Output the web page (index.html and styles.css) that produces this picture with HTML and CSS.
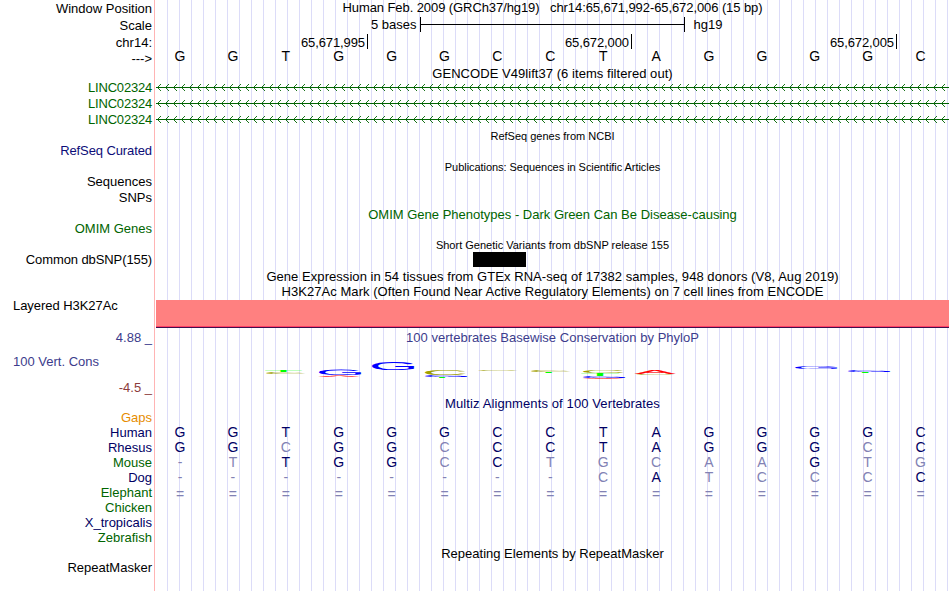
FILE: index.html
```html
<!DOCTYPE html>
<html lang="en">
<head>
<meta charset="utf-8">
<title>Genome Browser</title>
<link rel="stylesheet" href="styles.css">
</head>
<body>
<main class="browser">
  <div class="row h17"><div class="label">Window Position</div><div class="track up"><span class="t-pos">Human Feb. 2009 (GRCh37/hg19) &nbsp; chr14:65,671,992-65,672,006 (15 bp)</span></div></div>
  <div class="row h17"><div class="label">Scale</div><div class="scale up"><span class="bases">5 bases</span><span class="bar"></span><span>hg19</span></div></div>
  <div class="row h16"><div class="label">chr14:</div><div class="ruler"><span>65,671,995</span><span>65,672,000</span><span>65,672,005</span></div></div>
  <div class="row h16"><div class="label">---&gt;</div><div class="seq bases-row" data-seq="GGTGGGCCTAGGGGC"></div></div>
  <div class="row h14"><div class="label"></div><div class="track"><span class="t-gencode">GENCODE V49lift37 (6 items filtered out)</span></div></div>
  <div class="row h16"><div class="label green up linc">LINC02324</div><svg class="gene" viewBox="0 0 793 16"></svg></div>
  <div class="row h16"><div class="label green up linc">LINC02324</div><svg class="gene" viewBox="0 0 793 16"></svg></div>
  <div class="row h16"><div class="label green up linc">LINC02324</div><svg class="gene" viewBox="0 0 793 16"></svg></div>
  <div class="row h15"><div class="label"></div><div class="track small down"><span class="t-refseq">RefSeq genes from NCBI</span></div></div>
  <div class="row h16"><div class="label blue up tight">RefSeq Curated</div></div>
  <div class="row h15"><div class="label"></div><div class="track small down"><span class="t-pub">Publications: Sequences in Scientific Articles</span></div></div>
  <div class="row h16"><div class="label up">Sequences</div></div>
  <div class="row h16"><div class="label up">SNPs</div></div>
  <div class="row h17"><div class="label"></div><div class="track green"><span class="t-omim">OMIM Gene Phenotypes - Dark Green Can Be Disease-causing</span></div></div>
  <div class="row h14"><div class="label green up2">OMIM Genes</div></div>
  <div class="row h15"><div class="label"></div><div class="track small down"><span class="t-dbsnp">Short Genetic Variants from dbSNP release 155</span></div></div>
  <div class="row h15"><div class="label tight">Common dbSNP(155)</div><div class="snp"></div></div>
  <div class="row h18"><div class="label"></div><div class="track"><span class="t-gtex">Gene Expression in 54 tissues from GTEx RNA-seq of 17382 samples, 948 donors (V8, Aug 2019)</span></div></div>
  <div class="row h15"><div class="label"></div><div class="track up"><span class="t-h3k">H3K27Ac Mark (Often Found Near Active Regulatory Elements) on 7 cell lines from ENCODE</span></div></div>
  <div class="row h28"><div class="label left layered">Layered H3K27Ac</div><div class="signal"></div></div>
  <div class="row h18"><div class="label cons">4.88 _</div><div class="track cons"><span class="t-phylo">100 vertebrates Basewise Conservation by PhyloP</span></div></div>
  <div class="row h50"><div class="side"><div class="label left cons">100 Vert. Cons</div><div class="label neg">-4.5 _</div></div><svg class="logo" viewBox="156 346 793 50"></svg></div>
  <div class="row h15"><div class="label"></div><div class="track navy"><span class="t-multiz">Multiz Alignments of 100 Vertebrates</span></div></div>
  <div class="row h14"><div class="label orange up">Gaps</div></div>
  <div class="row h15"><div class="label navy">Human</div><div class="seq" data-seq="GGTGGGCCTAGGGGC"></div></div>
  <div class="row h15"><div class="label navy">Rhesus</div><div class="seq" data-seq="GGcGGcCCTAGGGcC"></div></div>
  <div class="row h15"><div class="label leaf">Mouse</div><div class="seq" data-seq="-tTGGcCtgcaaGtg"></div></div>
  <div class="row h15"><div class="label navy">Dog</div><div class="seq" data-seq="--------cAtcccC"></div></div>
  <div class="row h15"><div class="label leaf">Elephant</div><div class="seq down2" data-seq="==============="></div></div>
  <div class="row h15"><div class="label leaf">Chicken</div></div>
  <div class="row h15"><div class="label navy">X_tropicalis</div></div>
  <div class="row h15"><div class="label leaf">Zebrafish</div></div>
  <div class="row h15"><div class="label"></div><div class="track down"><span class="t-repeat">Repeating Elements by RepeatMasker</span></div></div>
  <div class="row h15"><div class="label">RepeatMasker</div></div>
</main>
<script src="script.js"></script>
</body>
</html>
```
FILE: styles.css
```css
* { box-sizing: border-box; }
body { margin: 0; background: #fff; }
.browser {
  width: 950px; height: 591px; overflow: hidden;
  font: 13px/15px "Liberation Sans", sans-serif; color: #000;
  background:
    linear-gradient(#ffb4b4, #ffb4b4) 154px 0 / 1px 100% no-repeat,
    repeating-linear-gradient(90deg, #dcdcf8 0 1px, transparent 1px 12px) 167px 0 / 783px 100% no-repeat;
}
.row { display: flex; align-items: center; }
.h14 { height: 14px; } .h15 { height: 15px; } .h16 { height: 16px; } .h17 { height: 17px; }
.h18 { height: 18px; } .h28 { height: 28px; } .h50 { height: 50px; }
.label { width: 156px; flex: none; padding-right: 4px; text-align: right; white-space: nowrap; }
.label.left { text-align: left; padding-left: 13px; }
.label.layered { align-self: flex-start; margin-top: -2px; letter-spacing: -0.05px; }
.track { width: 793px; text-align: center; white-space: pre; }
.up { margin-top: -2px; }
.up2 { margin-top: -4px; }
.down { margin-top: 2px; }
.down2 { margin-top: 4px; }
.small { font-size: 11px; }
.linc { letter-spacing: -0.2px; }
.tight { letter-spacing: -0.1px; }
.t-pos { letter-spacing: -0.085px; }
.t-gencode { letter-spacing: 0.05px; }
.t-pub { letter-spacing: -0.05px; }
.t-gtex { letter-spacing: 0.055px; }
.t-h3k { letter-spacing: 0.05px; }
.t-phylo { letter-spacing: 0.02px; }
.t-multiz { letter-spacing: 0.11px; }
.green { color: #006400; } .blue { color: #0c0c78; } .navy { color: #000064; }
.leaf { color: #006400; } .orange { color: #e68c00; } .cons { color: #3c3c8c; } .neg { color: #8c3c3c; }
.scale { display: flex; align-items: center; padding-left: 215px; height: 17px; }
.bases { margin-right: 3px; }
.bar {
  width: 265px; height: 15px; margin-right: 9px;
  border: solid #000; border-width: 0 1px;
  background: linear-gradient(#000, #000) 0 7px / 100% 1px no-repeat;
}
.ruler { display: flex; height: 16px; letter-spacing: -0.1px; }
.ruler span { height: 15px; padding-right: 2px; text-align: right; border-right: 1px solid #000; line-height: 17px; }
.ruler span:nth-child(1) { width: 212px; }
.ruler span:nth-child(2) { width: 264px; }
.ruler span:nth-child(3) { width: 265px; }
.row .seq { display: grid; grid-template-columns: repeat(15, 52.9px); margin-left: -2.4px; text-align: center; font-size: 14px; color: #000; }
.row .bases-row { margin-top: -3px; }
.row .label.navy + .seq, .row .label.leaf + .seq { color: #000064; }
.label + .seq .mismatch { color: #8282b4; }
.gene { width: 793px; height: 16px; display: block; fill: none; stroke: #006400; }
.gene .heads { stroke-width: 0.9; }
.snp { width: 53px; height: 15px; margin-left: 317px; background: #000; }
.signal { width: 793px; height: 28px; background: #ff8080; border-bottom: 1px solid #40104c; box-shadow: inset 0 -1px #ff4066; }
.side { display: flex; flex-direction: column; justify-content: space-between; height: 50px; padding: 8px 0 1px; }
.logo { width: 793px; height: 50px; font: 10px "Liberation Sans", sans-serif; text-rendering: geometricPrecision; }
.base-A { fill: #f00; } .base-C { fill: #a0a000; } .base-G { fill: #00f; } .base-T { fill: #0f0; }
.logo .base-A { stroke: #f00; stroke-width: 0.2; }
```
FILE: script.js
```js
const NS = "http://www.w3.org/2000/svg";

// Base letters, one per column; lower case marks a mismatch with the first species.
document.querySelectorAll(".seq").forEach(row => {
  for (const c of row.dataset.seq) {
    const cell = document.createElement("span");
    cell.textContent = c.toUpperCase();
    if (!/[A-Z]/.test(c)) cell.className = "mismatch";
    row.append(cell);
  }
});

// Intron line with reverse-strand arrowheads every 8px.
document.querySelectorAll(".gene").forEach(svg => {
  let heads = "";
  for (let x = 1; x < 793; x += 8) heads += `M${x + 4} 4L${x + 0.5} 7.5L${x + 4} 11`;
  for (const [name, d] of [["line", "M0 7.5H793"], ["heads", heads]]) {
    const path = document.createElementNS(NS, "path");
    path.setAttribute("class", name);
    path.setAttribute("d", d);
    svg.append(path);
  }
});

// Conservation logo: base, left, right, top, bottom.
const letters = [
  ["C", 266, 306, 372, 374], ["T", 265, 302, 370, 372],
  ["G", 319, 362, 370, 375.5], ["A", 319, 359, 375.5, 377],
  ["G", 372, 415, 362, 370],
  ["C", 425, 466, 370, 375], ["G", 425, 468, 375, 377], ["T", 425, 459, 377, 378],
  ["C", 478, 518, 370, 371],
  ["C", 531, 571, 370, 372], ["T", 530, 567, 372, 373],
  ["C", 583, 624, 370, 373], ["T", 581, 619, 373, 376], ["G", 583, 626, 376, 378], ["A", 583, 623, 378, 379],
  ["A", 635, 675, 370, 374], ["C", 636, 675, 374, 375],
  ["G", 795, 838, 366, 369],
  ["G", 848, 891, 370, 372], ["T", 846, 884, 372, 373]
];
const ink = { A: [0, 6.65, 0], C: [0.5, 6.9, 0.1], G: [0.5, 7.2, 0.1], T: [0.2, 5.9, 0] };
const logo = document.querySelector(".logo");
for (const [base, l, r, t, b] of letters) {
  const [x0, x1, over] = ink[base];
  const sx = (r - l) / (x1 - x0), sy = (b - t) / (6.88 + 2 * over);
  const el = document.createElementNS(NS, "text");
  el.setAttribute("class", "base-" + base);
  el.setAttribute("transform", `matrix(${sx} 0 0 ${sy} ${l - x0 * sx} ${b - over * sy})`);
  el.textContent = base;
  logo.append(el);
}
```
